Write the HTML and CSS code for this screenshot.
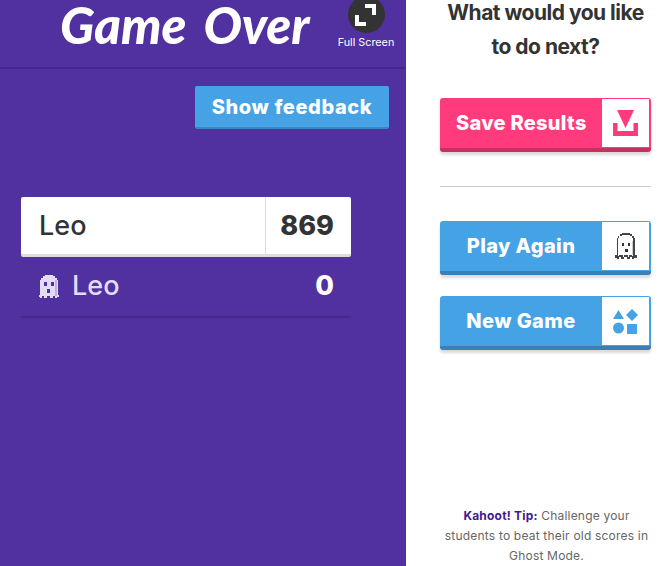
FILE: index.html
```html
<!DOCTYPE html>
<html lang="en">
<head>
    <meta charset="UTF-8">
    <meta name="viewport" content="width=device-width, initial-scale=1.0">
    <title>Game Over</title>
    <link rel="stylesheet" href="styles.css">
</head>
<body>
    <div class="page">
        <div class="main">
            <div class="header">
                <h1 class="title">Game Over</h1>
                <div class="fullscreen">
                    <div class="fullscreen-icon">
                        <svg width="22" height="22" viewBox="0 0 22 22">
                            <path d="M10 0h11v11h-4V4h-7z" fill="#fff"/>
                            <path d="M0 11h4v7h7v4H0z" fill="#fff"/>
                        </svg>
                    </div>
                    <div class="fullscreen-label">Full Screen</div>
                </div>
            </div>

            <div class="feedback-row">
                <button class="feedback-button">Show feedback</button>
            </div>

            <div class="scores">
                <div class="score-row current">
                    <div class="score-name">Leo</div>
                    <div class="score-value">869</div>
                </div>
                <div class="score-row ghost">
                    <div class="score-name">
                        <svg class="ghost-icon" width="20" height="23" viewBox="0 0 20 23" shape-rendering="crispEdges">
                            <path fill="#e4dcf5" d="M6 0h8v1h2v2h2v2h1v15h1v2h-2v1h-2v-2h-2v2h-3v-2H8v2H5v-2H3v2H1v-1H0v-2h1V5h1V3h2V1h2z"/>
                            <path fill="#bfb0e0" d="M16 5h2v16h-2z"/>
                            <path fill="#50319f" d="M5 7h3v4H5zM12 7h3v4h-3zM8 14h3v4H8z"/>
                        </svg>
                        <span>Leo</span>
                    </div>
                    <div class="score-value">0</div>
                </div>
            </div>
        </div>

        <div class="side">
            <h2 class="next-title">What would you like to do next?</h2>

            <a class="action pink">
                <span class="action-label left">Save Results</span>
                <span class="action-icon">
                    <svg width="25" height="26" viewBox="0 0 25 26">
                        <path d="M4 0h17l-8.500 18z" fill="#ff3b7d"/>
                        <path d="M0 13h4.500v8h16v-8H25v13H0z" fill="#ff3b7d"/>
                    </svg>
                </span>
            </a>

            <hr class="divider">

            <a class="action blue">
                <span class="action-label">Play Again</span>
                <span class="action-icon">
                    <svg width="22" height="26" viewBox="0 0 22 26" shape-rendering="crispEdges">
                        <path fill="#444" d="M7 0h8v1h2v2h2v2h1v17h2v3h-3v1h-2v-2h-2v2h-3v-2H9v2H6v-2H4v2H2v-1H0v-3h2V5h1V3h2V1h2z"/>
                        <path fill="#fff" d="M7 2h8v1h2v2h1v18h-1v-1h-3v2h-1v-2H9v2H8v-2H4v1H3V5h1V3h3z"/>
                        <path fill="#ccc" d="M17 8h1v14h-1z"/>
                        <path fill="#333" d="M7 10h2v3H7zM13 10h2v3h-2zM10 16h3v3h-3z"/>
                    </svg>
                </span>
            </a>

            <a class="action blue">
                <span class="action-label">New Game</span>
                <span class="action-icon">
                    <svg width="25" height="25" viewBox="0 0 25 25">
                        <path d="M5.500 1L11 10H0z" fill="#45a3e5"/>
                        <path d="M19 0l6 6-6 6-6-6z" fill="#45a3e5"/>
                        <circle cx="5.500" cy="19" r="5.500" fill="#45a3e5"/>
                        <rect x="14" y="15" width="10" height="10" fill="#45a3e5"/>
                    </svg>
                </span>
            </a>

            <p class="tip"><b>Kahoot! Tip:</b> Challenge your students to beat their old scores in Ghost Mode.</p>
        </div>
    </div>
</body>
</html>
```

FILE: styles.css
```css
html, body {
    margin: 0;
    height: 100%;
    overflow: hidden;
}
body {
    font-family: "Inter", "Liberation Sans", sans-serif;
    color: #333;
    background-color: #fff;
}
.page {
    display: flex;
    height: 566px;
}

/* left side */
.main {
    width: 406px;
    flex-shrink: 0;
    background-color: #50319f;
}
.header {
    display: flex;
    height: 67px;
    border-bottom: 2px solid #46298c;
    overflow: hidden;
}
.title {
    flex: 1;
    min-width: 0;
    margin: 0 0 0 60px;
    font-family: "Lato", sans-serif;
    font-size: 51px;
    font-style: italic;
    font-weight: 900;
    word-spacing: 6px;
    line-height: 50px;
    color: #fff;
    white-space: nowrap;
}
.fullscreen {
    flex-shrink: 0;
    width: 70px;
    margin-top: -21px;
    margin-right: 5px;
    text-align: center;
}
.fullscreen-icon {
    display: flex;
    align-items: center;
    justify-content: center;
    width: 37px;
    height: 37px;
    margin: 17px auto 0;
    border-radius: 50%;
    background-color: #333;
}
.fullscreen-label {
    margin-top: 3px;
    font-size: 10.800px;
    line-height: 14px;
    white-space: nowrap;
    color: #fff;
}
.feedback-row {
    display: flex;
    justify-content: flex-end;
    padding: 17px 17px 0 0;
}
.feedback-button {
    width: 194px;
    height: 43px;
    padding: 0;
    border: none;
    border-bottom: 2px solid #3a88c0;
    border-radius: 2px;
    background-color: #45a3e5;
    color: #fff;
    font-family: inherit;
    font-size: 20px;
    font-weight: 800;
    letter-spacing: 0.6px;
}
.scores {
    width: 330px;
    margin: 68px 0 0 21px;
}
.score-row {
    display: flex;
    align-items: stretch;
    font-size: 27px;
}
.score-row.current {
    height: 57px;
    border-bottom: 3px solid #ddd;
    border-radius: 2px;
    background-color: #fff;
    color: #333;
}
.score-row.ghost {
    height: 59px;
    border-bottom: 2px solid #46298c;
    color: #e4dcf5;
}
.score-name {
    display: flex;
    flex: 1;
    align-items: center;
    gap: 13px;
    padding-left: 18px;
    font-weight: 500;
}
.score-name span {
    margin-bottom: 2px;
}
.score-value {
    display: flex;
    align-items: center;
    justify-content: flex-end;
    width: 68px;
    padding-right: 17px;
    font-weight: 800;
}
.current .score-value {
    border-left: 1px solid #ddd;
}
.ghost .score-value {
    color: #fff;
    padding-bottom: 2px;
}

/* right side */
.side {
    position: relative;
    flex: 1;
    padding: 0 18px 0 34px;
}
.next-title {
    margin: -4px 0 0;
    padding: 0 2px;
    font-size: 21px;
    font-weight: 700;
    line-height: 34px;
    letter-spacing: -0.500px;
    text-align: center;
}
.action {
    display: flex;
    height: 48px;
    margin-top: 21px;
    padding: 1px 2px 1px 0;
    border-bottom: 4px solid;
    border-radius: 3px;
    box-shadow: 0 3px 3px rgba(0, 0, 0, 0.15);
    color: #fff;
}
.action.pink {
    margin-top: 34px;
    background-color: #ff3b7d;
    border-color: #c8305f;
}
.action.blue {
    background-color: #45a3e5;
    border-color: #3a7fb5;
}
.action-label {
    flex: 1;
    align-self: center;
    font-size: 20px;
    font-weight: 800;
    letter-spacing: 0.4px;
    text-align: center;
}
.action-label.left {
    padding-left: 16px;
    letter-spacing: 0.3px;
    text-align: left;
}
.action-icon {
    display: flex;
    align-items: center;
    justify-content: center;
    width: 47px;
    background-color: #fff;
}
.divider {
    height: 1px;
    margin: 34px 0 0;
    border: none;
    background-color: #ccc;
}
.divider + .action {
    margin-top: 34px;
}
.tip {
    position: absolute;
    left: 34px;
    right: 16px;
    top: 506px;
    margin: 0;
    font-size: 12px;
    letter-spacing: 0.200px;
    line-height: 20px;
    text-align: center;
    color: #666;
}
.tip b {
    color: #46178f;
}
```
